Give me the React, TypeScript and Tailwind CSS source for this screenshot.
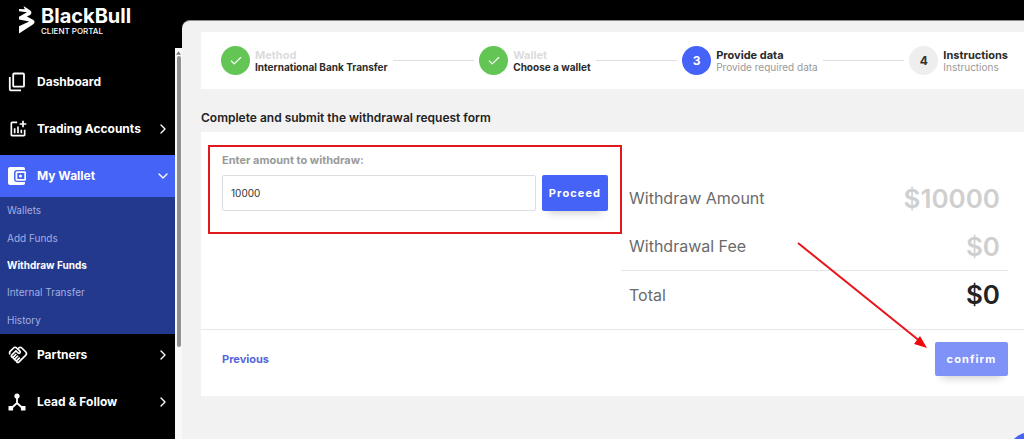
import React from 'react';
import { Check, ChevronDown, ChevronRight } from 'lucide-react';
import { MdOutlineAddchart, MdOutlineHandshake } from 'react-icons/md';

interface Step {
  title: string;
  subtitle: string;
  status: 'done' | 'current' | 'next';
}

interface NavItemProps {
  label: string;
  icon: React.ReactNode;
  active?: boolean;
  expandable?: boolean;
}

const steps: Step[] = [
  { title: 'Method', subtitle: 'International Bank Transfer', status: 'done' },
  { title: 'Wallet', subtitle: 'Choose a wallet', status: 'done' },
  { title: 'Provide data', subtitle: 'Provide required data', status: 'current' },
  { title: 'Instructions', subtitle: 'Instructions', status: 'next' },
];

const walletLinks = ['Wallets', 'Add Funds', 'Withdraw Funds', 'Internal Transfer', 'History'];

const Logo = () => (
  <svg viewBox="0 0 17 28" className="h-7 w-[17px] shrink-0" fill="currentColor" aria-hidden="true">
    <path d="M5.500 0L12 4.300Q14 5.800 13.300 7.500Q13 8.800 10.500 9.800L8.800 10.600L15 13.800Q17 15 16.500 16.500Q16.300 17.600 14.500 18.800L1 27.500V20.300L11.200 15.600L1 13.600V10.800L9 6.300L1 5.200V3L6.800 3.200Z" />
  </svg>
);

const DashboardIcon = () => (
  <svg viewBox="0 0 18 20" className="h-5 w-[18px]" fill="none" stroke="currentColor" strokeWidth="1.800" aria-hidden="true">
    <rect x="5.200" y="1.500" width="10.800" height="13.200" rx="1" />
    <path d="M1.800 5v12.300a1 1 0 0 0 1 1H13" />
  </svg>
);

const WalletIcon = () => (
  <svg viewBox="0 0 18 18" className="h-[18px] w-[18px]" fill="currentColor" aria-hidden="true">
    <path d="M2 0h13a2 2 0 0 1 2 2v1H9a3 3 0 0 0-3 3v6a3 3 0 0 0 3 3h8v1a2 2 0 0 1-2 2H2a2 2 0 0 1-2-2V2a2 2 0 0 1 2-2z" />
    <path fillRule="evenodd" d="M9 4.200h7.800A1.200 1.200 0 0 1 18 5.400v7.200a1.200 1.200 0 0 1-1.200 1.200H9a1.500 1.500 0 0 1-1.500-1.500V5.700A1.500 1.500 0 0 1 9 4.200zM9.300 6v6h7V6zM12.500 7.500a1.500 1.500 0 1 1 0 3 1.500 1.500 0 0 1 0-3z" />
  </svg>
);

const NodesIcon = () => (
  <svg viewBox="0 0 18 18" className="h-[18px] w-[18px]" fill="currentColor" aria-hidden="true">
    <circle cx="9" cy="3" r="2.600" />
    <path d="M9 4v6L3 15.500M9 10l6 5.500" fill="none" stroke="currentColor" strokeWidth="1.800" />
    <rect x="0.500" y="13" width="4.600" height="4.600" rx="0.500" />
    <rect x="12.900" y="13" width="4.600" height="4.600" rx="0.500" />
  </svg>
);

const NavItem: React.FC<NavItemProps> = ({ label, icon, active, expandable }) => (
  <button
    type="button"
    aria-expanded={expandable ? !!active : undefined}
    className={`flex h-[42px] w-full items-center pl-2 pr-1 text-left text-xs font-bold text-white ${active ? 'bg-[#4563f6]' : ''}`}
  >
    <span className="flex w-[29px] shrink-0 items-center">{icon}</span>
    <span className="flex-1 whitespace-nowrap">{label}</span>
    {expandable && (active ? <ChevronDown className="h-4 w-4" /> : <ChevronRight className="h-4 w-4" />)}
  </button>
);

const Sidebar = () => (
  <aside className="flex w-[182px] shrink-0 flex-col text-white">
    <div className="flex h-12 shrink-0 items-start gap-[6px] pl-[18px] pt-[6px]">
      <Logo />
      <div>
        <div className="text-xl/5 font-bold">BlackBull</div>
        <div className="whitespace-nowrap text-[8px]/[10px] font-medium">CLIENT PORTAL</div>
      </div>
    </div>
    <div className="flex min-h-0 flex-1">
      <nav className="flex w-[175px] flex-col overflow-hidden pt-[13px]">
        <div className="mb-[5px] flex flex-col gap-[5px]">
          <NavItem label="Dashboard" icon={<DashboardIcon />} />
          <NavItem label="Trading Accounts" icon={<MdOutlineAddchart className="h-5 w-5" />} expandable />
        </div>
        <NavItem label="My Wallet" icon={<WalletIcon />} active expandable />
        <ul className="h-[137px] shrink-0 bg-[#23398d] text-[10px]">
          {walletLinks.map(link => (
            <li key={link} className="h-1/5">
              <a
                href="#"
                className={`flex h-full items-center pl-[7px] ${link === 'Withdraw Funds' ? 'font-bold text-white' : 'text-[#a3aee0]'}`}
              >
                {link}
              </a>
            </li>
          ))}
        </ul>
        <div className="flex flex-col gap-[5px]">
          <NavItem label="Partners" icon={<MdOutlineHandshake className="h-5 w-5" />} expandable />
          <NavItem label="Lead & Follow" icon={<NodesIcon />} expandable />
        </div>
      </nav>
      {/* Scroll bar */}
      <div className="flex flex-1 flex-col items-center bg-[#f8f8f8] pt-[3px]" aria-hidden="true">
        <svg viewBox="0 0 6 4" className="h-1 w-[5px]" fill="#777">
          <path d="M3 0l3 4H0z" />
        </svg>
        <div className="mt-px h-3/4 w-1 rounded-full bg-[#8f8f8f]" />
      </div>
    </div>
  </aside>
);

const Stepper = () => (
  <ol className="flex h-[57px] items-center gap-[5px] bg-white pl-5 pr-4">
    {steps.map((step, i) => (
      <React.Fragment key={step.title}>
        {i > 0 && <li aria-hidden="true" className="h-px min-w-4 flex-1 bg-[#dedede]" />}
        <li className="flex items-center gap-[5px]">
          <span
            className={`flex h-[29px] w-[29px] shrink-0 items-center justify-center rounded-full text-xs font-bold ${
              step.status === 'done'
                ? 'bg-[#62c554] text-white'
                : step.status === 'current'
                  ? 'bg-[#4563f6] text-white'
                  : 'bg-[#eeeeef] text-[#333]'
            }`}
          >
            {step.status === 'done' ? <Check className="h-[14px] w-[14px]" /> : i + 1}
          </span>
          <span className="flex flex-col whitespace-nowrap">
            <span className={`text-[11px]/3 font-bold ${step.status === 'done' ? 'text-[#dcdcdc]' : 'text-[#2b2b2b]'}`}>
              {step.title}
            </span>
            <span className={`text-[10px]/3 ${step.status === 'done' ? 'font-bold text-[#2b2b2b]' : 'text-[#999]'}`}>
              {step.subtitle}
            </span>
          </span>
        </li>
      </React.Fragment>
    ))}
  </ol>
);

const SummaryRow = ({ label, value, total }: { label: string; value: string; total?: boolean }) => (
  <div className={`flex h-12 items-center justify-between px-2 ${total ? 'border-t border-[#e6e6e6]' : ''}`}>
    <dt className="text-base text-[#6b6b6b]">{label}</dt>
    <dd className={`text-[26px] font-semibold ${total ? 'text-[#222]' : 'text-[#cfcfcf]'}`}>{value}</dd>
  </div>
);

const WithdrawForm = () => {
  const [amount, setAmount] = React.useState('10000');

  return (
    <form className="relative bg-white" onSubmit={e => e.preventDefault()}>
      <div className="flex h-[198px] border-b border-[#e8e8e8] pr-4">
        <div className="min-w-0 flex-1 pl-[21px] pr-[13px] pt-5">
          <label htmlFor="amount" className="block text-[11px]/4 font-bold text-[#9a9a9a]">
            Enter amount to withdraw:
          </label>
          <div className="mt-[7px] flex gap-[6px]">
            <input
              id="amount"
              type="text"
              value={amount}
              onChange={e => setAmount(e.target.value)}
              className="h-9 min-w-0 flex-1 rounded-xs border border-[#dcdfe2] px-2 text-[10px] text-[#333] outline-none focus:border-[#4563f6]"
            />
            <button
              type="button"
              className="h-9 w-[66px] rounded-xs bg-[#4563f6] text-[11px] font-bold tracking-widest text-white shadow-[0_8px_8px_-6px_rgba(0,0,0,0.2)]"
            >
              Proceed
            </button>
          </div>
        </div>
        <dl className="w-[387px] shrink-0 pt-[42px]">
          <SummaryRow label="Withdraw Amount" value={`$${amount}`} />
          <SummaryRow label="Withdrawal Fee" value="$0" />
          <SummaryRow label="Total" value="$0" total />
        </dl>
      </div>
      <div className="flex h-[66px] items-start justify-between pl-[21px] pr-4 pt-3">
        <a href="#" className="text-[11px]/[34px] font-bold text-[#5566dc]">Previous</a>
        <button
          type="submit"
          className="h-[34px] w-[73px] rounded-xs bg-[#7f92f8] text-[11px] font-bold tracking-widest text-white shadow-[0_8px_8px_-6px_rgba(0,0,0,0.2)]"
        >
          confirm
        </button>
      </div>

      {/* Highlight box and arrow */}
      <div className="pointer-events-none absolute left-[7px] right-[402px] top-[13px] h-[89px] border-2 border-[#e0191c]" />
      <svg viewBox="0 0 132 108" className="pointer-events-none absolute right-[95px] top-[110px] h-[108px] w-[132px]" aria-hidden="true">
        <path d="M1 1L124 100" stroke="#e8141a" strokeWidth="2" />
        <path d="M130 106L117 102L123 94Z" fill="#f0080c" />
      </svg>
    </form>
  );
};

const App = () => {
  return (
    <div className="flex h-screen overflow-hidden bg-black font-['Inter','Liberation_Sans',sans-serif]">
      <Sidebar />
      <main className="mt-5 min-w-0 flex-1 rounded-tl-lg border-t border-[#8c8c8c] bg-[#f2f2f2] pl-[19px] pt-[11px]">
        <Stepper />
        <h1 className="mb-[6px] mt-[21px] text-xs/4 font-semibold text-[#222]">
          Complete and submit the withdrawal request form
        </h1>
        <WithdrawForm />
      </main>
      <button
        type="button"
        aria-label="Open chat"
        className="fixed -bottom-[41px] -right-[31px] h-12 w-12 rounded-full bg-[#4563f6] shadow"
      />
    </div>
  );
};

export default App;
